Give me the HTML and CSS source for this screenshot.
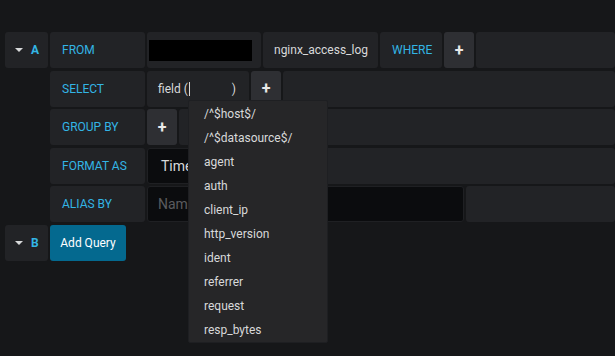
FILE: index.html
```html
<!DOCTYPE html>
<html lang="en">
<head>
  <meta charset="UTF-8" />
  <title>Query editor</title>
  <link rel="stylesheet" href="styles.css">
</head>
<body>
  <div class="editor">
    <div class="row">
      <div class="ref"><span class="caret"></span><span class="ref-id">A</span></div>
      <div class="label">FROM</div>
      <div class="segment from-db"><span class="redacted"></span></div>
      <div class="segment measurement">nginx_access_log</div>
      <div class="label where">WHERE</div>
      <div class="plus">+</div>
      <div class="filler"></div>
    </div>

    <div class="row indent">
      <div class="label">SELECT</div>
      <div class="segment field">field (<span class="cursor"></span><span class="close">)</span></div>
      <div class="plus">+</div>
      <div class="filler"></div>
    </div>

    <div class="row indent">
      <div class="label">GROUP BY</div>
      <div class="plus">+</div>
      <div class="filler"></div>
    </div>

    <div class="row indent">
      <div class="label">FORMAT AS</div>
      <div class="select">Time series</div>
      <div class="filler"></div>
    </div>

    <div class="row indent">
      <div class="label">ALIAS BY</div>
      <div class="input placeholder">Naming pattern</div>
      <div class="filler"></div>
    </div>

    <div class="row">
      <div class="ref"><span class="caret"></span><span class="ref-id">B</span></div>
      <div class="add-query">Add Query</div>
    </div>

    <ul class="dropdown">
      <li>/^$host$/</li>
      <li>/^$datasource$/</li>
      <li>agent</li>
      <li>auth</li>
      <li>client_ip</li>
      <li>http_version</li>
      <li>ident</li>
      <li>referrer</li>
      <li>request</li>
      <li>resp_bytes</li>
    </ul>
  </div>
</body>
</html>
```

FILE: styles.css
```css
:root {
  --bg: #161719;
  --box: #222326;
  --btn: #2e2f33;
  --input: #0b0c0e;
  --blue: #33b5e5;
  --text: #d8d9da;
  --menu: #262628;
}

* {
  box-sizing: border-box;
}

html, body {
  min-height: 100vh;
}

body {
  margin: 0;
  background: var(--bg);
  font-family: Roboto, "Liberation Sans", sans-serif;
  font-size: 12px;
  color: var(--text);
}

.editor {
  position: relative;
  min-height: 356px;
  padding: 32px 0 0 5px;
  display: flex;
  flex-direction: column;
  gap: 2.5px;
}

.row {
  display: flex;
  gap: 2px;
  height: 36px;
}

.row.indent {
  padding-left: 45px;
}

.row > div {
  border-radius: 3px;
  display: flex;
  align-items: center;
}

.ref {
  width: 43px;
  background: var(--box);
  padding-left: 10px;
  gap: 8px;
}

.caret {
  width: 0;
  height: 0;
  border-left: 4px solid transparent;
  border-right: 4px solid transparent;
  border-top: 4px solid var(--text);
}

.ref-id {
  color: var(--blue);
  font-weight: 700;
}

.label {
  width: 95px;
  background: var(--box);
  color: var(--blue);
  padding-left: 12px;
}

.label.where {
  width: 62px;
}

.segment {
  background: var(--box);
  padding: 0 11px;
}

.from-db {
  width: 114px;
  padding: 0 2px;
}

.redacted {
  width: 103px;
  height: 21px;
  background: #000;
}

.measurement {
  width: 115px;
}

.field {
  width: 102px;
}

.cursor {
  width: 1px;
  height: 14px;
  background: var(--text);
  margin-left: 1px;
}

.close {
  margin-left: auto;
  margin-right: 2px;
}

.plus {
  width: 30px;
  background: var(--btn);
  justify-content: center;
  font-weight: 700;
  font-size: 16px;
  color: #e9e9e9;
}

.filler {
  flex: 1;
  background: var(--box);
}

.select {
  width: 130px;
  background: var(--input);
  border: 1px solid #1f2023;
  padding-left: 13px;
  font-size: 14px;
}

.input {
  width: 317px;
  background: var(--input);
  border: 1px solid #1f2023;
  padding-left: 10px;
  font-size: 14px;
}

.placeholder {
  color: #5a5b5e;
}

.row > .add-query {
  width: 76px;
  background: #04698f;
  color: #fff;
  justify-content: center;
}

.dropdown {
  position: absolute;
  left: 188px;
  top: 100px;
  width: 140px;
  margin: 0;
  padding: 1px 0 0;
  list-style: none;
  background: var(--menu);
  border: 1px solid #1e1f22;
  border-radius: 2px;
}

.dropdown li {
  height: 24px;
  line-height: 24px;
  padding-left: 15px;
}
```
